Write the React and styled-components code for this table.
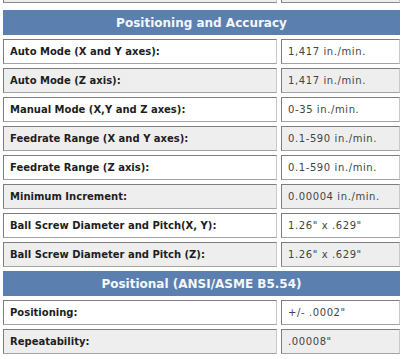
import React from "react";
import styled, { createGlobalStyle } from "styled-components";

const Global = createGlobalStyle`
  html, body { margin: 0; padding: 0; background: #ffffff; }
  body { font-family: "DejaVu Sans", Verdana, sans-serif; }
`;

const Page = styled.div`
  width: 403px;
  height: 359px;
  overflow: hidden;
  padding: 0 3px;
  box-sizing: border-box;
`;

const Grid = styled.div`
  display: grid;
  grid-template-columns: 274px 119px;
  column-gap: 4px;
  row-gap: 4px;
`;

const CutCell = styled.div`
  height: 2px;
  background: #eeeeee;
  border-bottom: 1px solid #8a8a8a;
  border-right: 1px solid #c8c8c8;
  border-left: 1px solid #7a7a7a;
`;

const CutRow = styled.div`
  grid-column: 1 / -1;
  display: grid;
  grid-template-columns: 274px 119px;
  column-gap: 4px;
  margin-bottom: 3px;
`;

const Header = styled.div`
  grid-column: 1 / -1;
  height: 25px;
  background: #5b7faf;
  color: #f4f7fb;
  font-weight: bold;
  font-size: 12px;
  display: flex;
  align-items: center;
  justify-content: center;
  box-sizing: border-box;
`;

const Cell = styled.div`
  height: 25px;
  box-sizing: border-box;
  border: 1px solid;
  border-color: #7d7d7d #c9c9c9 #a3a3a3 #7d7d7d;
  background: ${(p) => (p.$alt ? "#eeeeee" : "#ffffff")};
  display: flex;
  align-items: center;
  padding-left: 6px;
  font-size: 10px;
  white-space: nowrap;
`;

const Label = styled(Cell)`
  font-weight: bold;
  color: #1e1e1e;
`;

const Value = styled(Cell)`
  color: #444444;
  letter-spacing: 0.6px;
`;

const sections = [
  {
    title: "Positioning and Accuracy",
    rows: [
      ["Auto Mode (X and Y axes):", "1,417 in./min."],
      ["Auto Mode (Z axis):", "1,417 in./min."],
      ["Manual Mode (X,Y and Z axes):", "0-35 in./min."],
      ["Feedrate Range (X and Y axes):", "0.1-590 in./min."],
      ["Feedrate Range (Z axis):", "0.1-590 in./min."],
      ["Minimum Increment:", "0.00004 in./min."],
      ["Ball Screw Diameter and Pitch(X, Y):", "1.26\" x .629\""],
      ["Ball Screw Diameter and Pitch (Z):", "1.26\" x .629\""],
    ],
  },
  {
    title: "Positional (ANSI/ASME B5.54)",
    rows: [
      ["Positioning:", "+/- .0002\""],
      ["Repeatability:", ".00008\""],
    ],
  },
];

export default function App() {
  return (
    <>
      <Global />
      <Page>
        <Grid>
          <CutRow>
            <CutCell />
            <CutCell />
          </CutRow>
          {sections.map((s) => (
            <React.Fragment key={s.title}>
              <Header>{s.title}</Header>
              {s.rows.map(([l, v], i) => (
                <React.Fragment key={l}>
                  <Label $alt={i % 2 === 1}>{l}</Label>
                  <Value $alt={i % 2 === 1}>{v}</Value>
                </React.Fragment>
              ))}
            </React.Fragment>
          ))}
        </Grid>
      </Page>
    </>
  );
}
